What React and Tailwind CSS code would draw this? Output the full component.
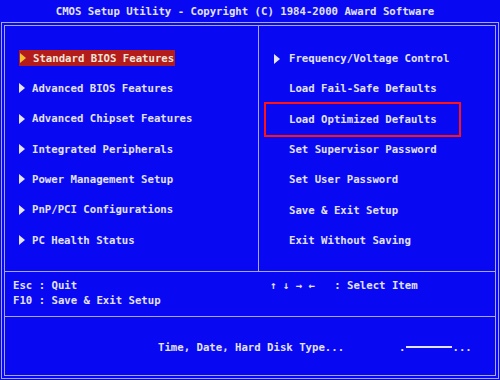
const leftItems = [
  'Standard BIOS Features',
  'Advanced BIOS Features',
  'Advanced Chipset Features',
  'Integrated Peripherals',
  'Power Management Setup',
  'PnP/PCI Configurations',
  'PC Health Status',
];

const rightItems = [
  { label: 'Frequency/Voltage Control', arrow: true },
  { label: 'Load Fail-Safe Defaults' },
  { label: 'Load Optimized Defaults' },
  { label: 'Set Supervisor Password' },
  { label: 'Set User Password' },
  { label: 'Save & Exit Setup' },
  { label: 'Exit Without Saving' },
];

function Arrow({ color = '#e4e4f4' }) {
  return (
    <svg width="6" height="10" viewBox="0 0 6 10" className="shrink-0">
      <polygon points="0,0 6,5 0,10" fill={color} />
    </svg>
  );
}

export default function App() {
  return (
    <div
      className="w-[500px] h-[380px] bg-[#0808f2] text-[#e2e2f2] font-bold text-[10.67px] leading-[15px] overflow-hidden"
      style={{ fontFamily: '"DejaVu Sans Mono", "Liberation Mono", monospace' }}
    >
      <div className="h-[22px] flex items-center justify-center pr-[10px] whitespace-pre">
        CMOS Setup Utility - Copyright (C) 1984-2000 Award Software
      </div>

      <div className="mx-[1px] h-[357px] border border-[#a8a8e0] p-[2px]">
        <div className="h-full border border-[#a8a8e0] flex flex-col">
          <div className="h-[246px] flex border-b border-[#a8a8e0]">
            <div className="w-[254px] border-r border-[#a8a8e0] pt-[17px]">
              {leftItems.map((item, i) => (
                <div key={item} className="h-[30.33px] flex items-center pl-[14px]">
                  {i === 0 ? (
                    <span className="h-[16px] flex items-center bg-[#b41c1c] pl-[1px] pr-[1px] text-[#f2e6d8]">
                      <Arrow color="#f4c030" />
                      <span className="ml-[7px]">{item}</span>
                    </span>
                  ) : (
                    <>
                      <Arrow />
                      <span className="ml-[7px]">{item}</span>
                    </>
                  )}
                </div>
              ))}
            </div>

            <div className="relative flex-1 pt-[17.5px]">
              {rightItems.map((item) => (
                <div
                  key={item.label}
                  className={`h-[30.33px] flex items-center whitespace-pre ${item.arrow ? 'pl-[15px]' : 'pl-[30px]'}`}
                >
                  {item.arrow && <Arrow />}
                  <span className={item.arrow ? 'ml-[9px]' : ''}>{item.label}</span>
                </div>
              ))}
              <div className="absolute left-[5px] top-[76px] w-[197px] h-[35px] border-2 border-[#ff1414]" />
            </div>
          </div>

          <div className="h-[45px] border-b border-[#a8a8e0] pt-[6px] pl-[8px] flex whitespace-pre">
            <div className="w-[257px]">
              <div>Esc : Quit</div>
              <div>F10 : Save &amp; Exit Setup</div>
            </div>
            <div>↑ ↓ → ←   : Select Item</div>
          </div>

          <div className="flex-1 flex items-center pt-[2px] pl-[153px] whitespace-pre">
            <span>Time, Date, Hard Disk Type...</span>
            <span className="ml-[55px] flex items-center">
              <span>.</span>
              <span className="w-[46px] h-[2px] bg-[#e2e2f2] ml-[1px]" />
              <span>...</span>
            </span>
          </div>
        </div>
      </div>
    </div>
  );
}
